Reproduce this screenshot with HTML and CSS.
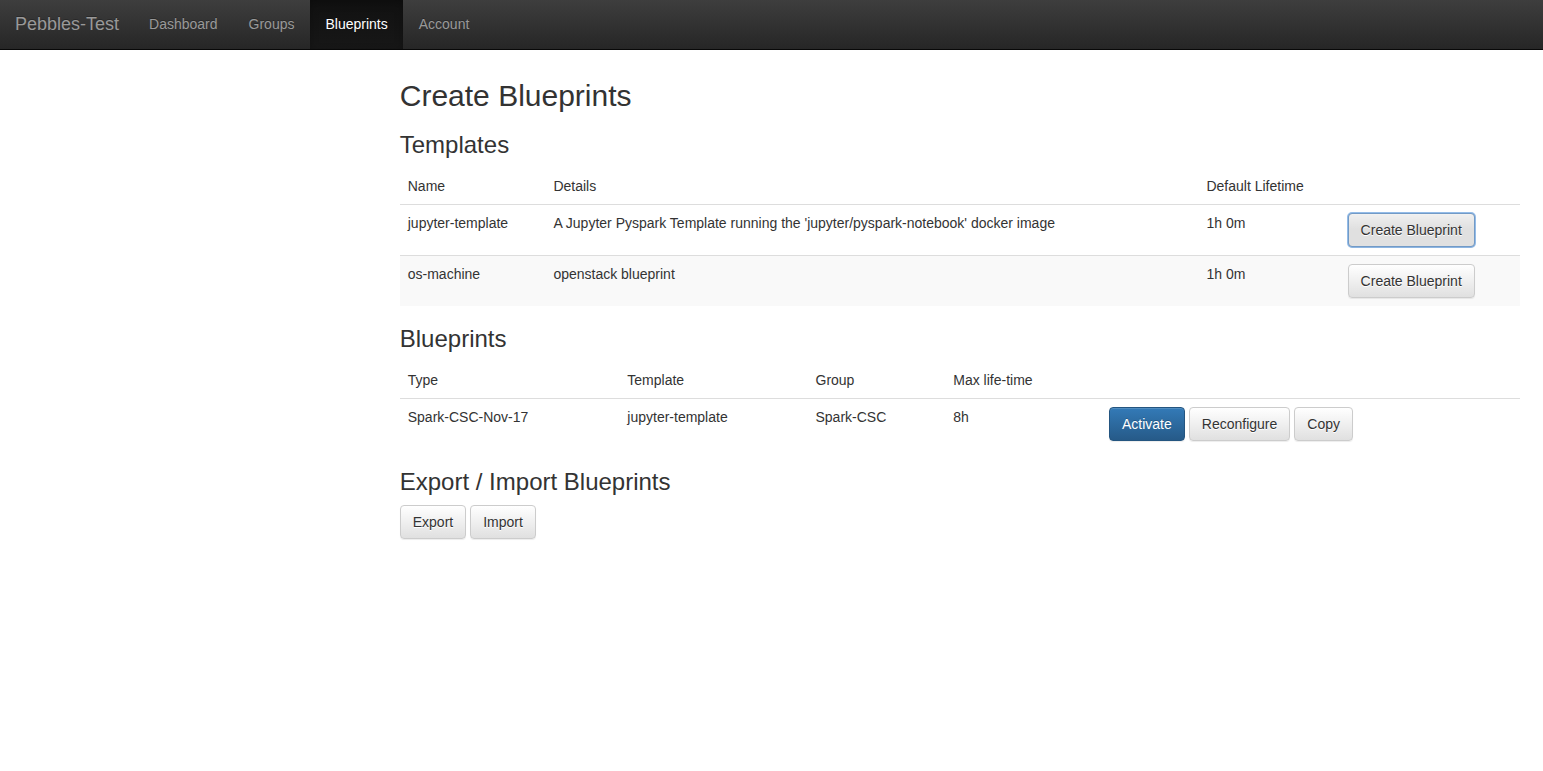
FILE: index.html
```html
<!DOCTYPE html>
<html lang="en">
<head>
<meta charset="utf-8">
<title>Pebbles-Test</title>
<link rel="stylesheet" href="styles.css">
</head>
<body>
<nav class="navbar">
  <a class="brand" href="#">Pebbles-Test</a>
  <ul class="nav">
    <li><a href="#">Dashboard</a></li>
    <li><a href="#">Groups</a></li>
    <li><a class="active" href="#">Blueprints</a></li>
    <li><a href="#">Account</a></li>
  </ul>
</nav>
<main class="main">
  <h2>Create Blueprints</h2>

  <h3>Templates</h3>
  <table class="table templates">
    <colgroup><col class="name"><col class="details"><col class="lifetime"><col></colgroup>
    <thead>
      <tr><th>Name</th><th>Details</th><th>Default Lifetime</th><td></td></tr>
    </thead>
    <tbody>
      <tr>
        <td>jupyter-template</td>
        <td>A Jupyter Pyspark Template running the 'jupyter/pyspark-notebook' docker image</td>
        <td>1h 0m</td>
        <td><div class="actions"><button type="button" class="btn btn-focused">Create Blueprint</button></div></td>
      </tr>
      <tr class="striped">
        <td>os-machine</td>
        <td>openstack blueprint</td>
        <td>1h 0m</td>
        <td><div class="actions"><button type="button" class="btn">Create Blueprint</button></div></td>
      </tr>
    </tbody>
  </table>

  <h3>Blueprints</h3>
  <table class="table blueprints">
    <colgroup><col class="type"><col class="template"><col class="group"><col class="max"><col></colgroup>
    <thead>
      <tr><th>Type</th><th>Template</th><th>Group</th><th>Max life-time</th><td></td></tr>
    </thead>
    <tbody>
      <tr>
        <td>Spark-CSC-Nov-17</td>
        <td>jupyter-template</td>
        <td>Spark-CSC</td>
        <td>8h</td>
        <td><div class="actions">
          <button type="button" class="btn btn-primary">Activate</button>
          <button type="button" class="btn">Reconfigure</button>
          <button type="button" class="btn">Copy</button>
        </div></td>
      </tr>
    </tbody>
  </table>

  <h3>Export / Import Blueprints</h3>
  <div class="actions">
    <button type="button" class="btn">Export</button>
    <button type="button" class="btn">Import</button>
  </div>
</main>
</body>
</html>
```

FILE: styles.css
```css
* { box-sizing: border-box; }

body {
  margin: 0;
  background: #fff;
  color: #333;
  font-family: "Liberation Sans", Arial, sans-serif;
  font-size: 14px;
  line-height: 20px;
}

.navbar {
  display: flex;
  border-bottom: 1px solid #080808;
  background: linear-gradient(to bottom, #3e3e3e 0%, #262626 100%);
}

.navbar a {
  display: block;
  padding: 14px 15px 15px;
  color: #999;
  text-decoration: none;
  text-shadow: 0 -1px 0 rgba(0, 0, 0, .25);
}

.navbar .brand { font-size: 18px; }

.nav {
  display: flex;
  gap: 1px;
  margin: 0;
  padding: 0;
  list-style: none;
}

.navbar .active {
  color: #fff;
  background: linear-gradient(to bottom, #111 0%, #171717 100%);
  box-shadow: inset 0 3px 9px rgba(0, 0, 0, .25);
}

.main {
  margin-left: 25%;
  padding: 29px 23px 20px 14px;
}

h2, h3 { font-weight: 500; }

h2 {
  margin: 0 0 20px;
  font-size: 30px;
  line-height: 33px;
}

h3 {
  margin: 20px 0 10px;
  font-size: 24px;
  line-height: 26px;
}

.table {
  width: 100%;
  table-layout: fixed;
  border-collapse: separate;
  border-spacing: 0;
}

.table th,
.table td {
  padding: 8px;
  text-align: left;
  vertical-align: top;
  font-weight: 400;
}

.table tbody td { border-top: 1px solid #ddd; }
.striped { background: #f9f9f9; }

.name { width: 13%; }
.details { width: 58.3%; }
.lifetime { width: 12.6%; }

.type { width: 19.6%; }
.template { width: 16.8%; }
.group { width: 12.3%; }
.max { width: 13.9%; }

.actions {
  display: flex;
  gap: 4px;
}

.btn {
  padding: 6px 12px;
  border: 1px solid #ccc;
  border-radius: 4px;
  background: linear-gradient(to bottom, #fff 0%, #e0e0e0 100%);
  box-shadow: inset 0 1px 0 rgba(255, 255, 255, .15), 0 1px 1px rgba(0, 0, 0, .075);
  color: #333;
  font: inherit;
  text-shadow: 0 1px 0 #fff;
  cursor: pointer;
}

.btn-primary {
  border-color: #245580;
  background: linear-gradient(to bottom, #337ab7 0%, #265a88 100%);
  color: #fff;
  text-shadow: 0 -1px 0 rgba(0, 0, 0, .2);
}

.btn-focused {
  border-color: #aaa;
  background: linear-gradient(to bottom, #f0f0f0 0, #e0e0e0 15px);
  outline: 2px solid rgba(77, 144, 217, .6);
  outline-offset: -1px;
}
```
